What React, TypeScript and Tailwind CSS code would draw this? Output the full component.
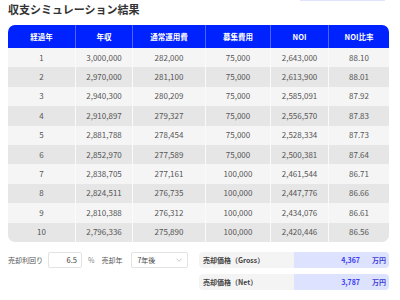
import React from "react";

const rows = [
  ["1", "3,000,000", "282,000", "75,000", "2,643,000", "88.10"],
  ["2", "2,970,000", "281,100", "75,000", "2,613,900", "88.01"],
  ["3", "2,940,300", "280,209", "75,000", "2,585,091", "87.92"],
  ["4", "2,910,897", "279,327", "75,000", "2,556,570", "87.83"],
  ["5", "2,881,788", "278,454", "75,000", "2,528,334", "87.73"],
  ["6", "2,852,970", "277,589", "75,000", "2,500,381", "87.64"],
  ["7", "2,838,705", "277,161", "100,000", "2,461,544", "86.71"],
  ["8", "2,824,511", "276,735", "100,000", "2,447,776", "86.66"],
  ["9", "2,810,388", "276,312", "100,000", "2,434,076", "86.61"],
  ["10", "2,796,336", "275,890", "100,000", "2,420,446", "86.56"],
];

const headers = ["経過年", "年収", "通常運用費", "募集費用", "NOI", "NOI比率"];

const font = { fontFamily: '"Noto Sans CJK JP", "Noto Sans", sans-serif' };

export default function App() {
  return (
    <div className="w-[400px] h-[300px] bg-white overflow-hidden relative" style={font}>
      <div className="flex justify-end">
        <div className="w-[85px] h-[1px] bg-[#dfe4ff] mr-[15px]" />
      </div>
      <div className="px-[8px]">
        <div className="text-[11px] leading-[14px] font-bold text-[#333] mt-[1px]">収支シミュレーション結果</div>
        <div className="mt-[9px] w-[381px] rounded-[7px] overflow-hidden">
          <div className="grid grid-cols-[67px_57px_73px_65px_58px_61px] bg-[#0022ff] h-[23px]">
            {headers.map((h, i) => (
              <div
                key={i}
                className={`flex items-center justify-center text-white text-[7.5px] font-bold ${i > 0 ? "border-l border-[#4d63ff]" : ""}`}
              >
                {h}
              </div>
            ))}
          </div>
          {rows.map((r, ri) => (
            <div
              key={ri}
              className={`grid grid-cols-[67px_57px_73px_65px_58px_61px] h-[19.4px] ${ri % 2 === 0 ? "bg-[#f5f5f5]" : "bg-[#e6e6e6]"}`}
            >
              {r.map((c, ci) => (
                <div
                  key={ci}
                  className={`flex items-center justify-center text-[8px] text-[#555] ${ci > 0 ? "border-l border-[#fafafa]" : ""}`}
                >
                  {c}
                </div>
              ))}
            </div>
          ))}
        </div>
        <div className="flex mt-[10px]">
          <div className="w-[191px] flex items-start">
            <div className="flex items-center h-[16px]">
              <span className="text-[7px] text-[#555] w-[40px]">売却利回り</span>
              <div className="w-[34px] h-[16px] border border-[#e3e3e3] rounded-[2px] bg-white flex items-center justify-end pr-[4px] text-[7.5px] text-[#444]">
                6.5
              </div>
              <span className="text-[7px] text-[#888] ml-[6px]">%</span>
              <span className="text-[7px] text-[#555] ml-[7px]">売却年</span>
              <div className="ml-[9px] w-[57px] h-[16px] border border-[#e3e3e3] rounded-[2px] bg-white flex items-center justify-between px-[5px] text-[7px] text-[#444]">
                <span>7年後</span>
                <svg width="6" height="4" viewBox="0 0 6 4" fill="none">
                  <path d="M0.5 0.8 L3 3.2 L5.5 0.8" stroke="#bbb" strokeWidth="0.8" />
                </svg>
              </div>
            </div>
          </div>
          <div className="w-[190px] flex flex-col gap-[6px]">
            {[
              ["売却価格（Gross）", "4,367"],
              ["売却価格（Net）", "3,787"],
            ].map(([l, v], i) => (
              <div key={i} className="flex h-[16px] rounded-[4px] overflow-hidden">
                <div className="w-[95px] bg-[#f4f4f4] flex items-center pl-[4px] text-[7px] font-semibold text-[#444]">
                  {l}
                </div>
                <div className="flex-1 bg-[#dde2ff] flex items-center justify-end pr-[3px] text-[7px] font-semibold text-[#3d3df0]">
                  <span>{v}</span>
                  <span className="ml-[12px] text-[#3d3dd8]">万円</span>
                </div>
              </div>
            ))}
          </div>
        </div>
      </div>
    </div>
  );
}
